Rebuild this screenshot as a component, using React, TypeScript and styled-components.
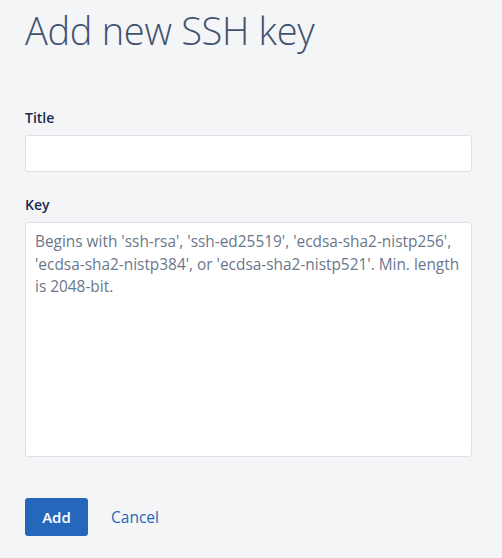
import React from "react";
import styled, { createGlobalStyle } from "styled-components";

const GlobalStyle = createGlobalStyle`
  body {
    margin: 0;
    background: #f4f5f7;
    font-family: "Open Sans", "Liberation Sans", sans-serif;
  }
`;

const AddSshKeyPage: React.FC = () => {
  return (
    <Page>
      <GlobalStyle />
      <Heading>Add new SSH key</Heading>
      <Form onSubmit={(e) => e.preventDefault()}>
        <Field>
          <Label htmlFor="ssh-title">Title</Label>
          <TextInput id="ssh-title" type="text" />
        </Field>
        <Field>
          <Label htmlFor="ssh-key">Key</Label>
          <KeyArea
            id="ssh-key"
            placeholder="Begins with 'ssh-rsa', 'ssh-ed25519', 'ecdsa-sha2-nistp256', 'ecdsa-sha2-nistp384', or 'ecdsa-sha2-nistp521'. Min. length is 2048-bit."
          />
        </Field>
        <Actions>
          <PrimaryButton type="submit">Add</PrimaryButton>
          <LinkButton type="button">Cancel</LinkButton>
        </Actions>
      </Form>
    </Page>
  );
};

export default AddSshKeyPage;

const Page = styled.div`
  width: 502px;
  height: 558px;
  box-sizing: border-box;
  padding: 0 30px 0 25px;
  background: #f4f5f7;
`;

const Heading = styled.h1`
  margin: 0;
  padding-top: 5px;
  font-size: 38px;
  font-weight: 300;
  line-height: 50px;
  color: #42526e;
  letter-spacing: -0.3px;
`;

const Form = styled.form`
  display: flex;
  flex-direction: column;
  margin-top: 53px;
`;

const Field = styled.div`
  display: flex;
  flex-direction: column;
  gap: 7px;
  margin-bottom: 23px;
`;

const Label = styled.label`
  font-size: 14px;
  font-weight: 600;
  line-height: 20px;
  color: #172b4d;
`;

const fieldBox = `
  box-sizing: border-box;
  width: 100%;
  border: 1px solid #dfe1e6;
  border-radius: 3px;
  background: #ffffff;
  font-family: "Open Sans", "Liberation Sans", sans-serif;
  outline: none;
`;

const TextInput = styled.input`
  ${fieldBox}
  height: 37px;
  padding: 0 10px;
  font-size: 15px;
`;

const KeyArea = styled.textarea`
  ${fieldBox}
  height: 235px;
  padding: 8px 9px;
  font-size: 15.4px;
  line-height: 22.5px;
  resize: none;
  color: #172b4d;

  &::placeholder {
    color: #6b778c;
    opacity: 1;
  }
`;

const Actions = styled.div`
  display: flex;
  align-items: center;
  gap: 8px;
  margin-top: 18px;
`;

const PrimaryButton = styled.button`
  width: 63px;
  height: 38px;
  border: none;
  border-radius: 3px;
  background: #2567ba;
  color: #ffffff;
  font-family: "Open Sans", "Liberation Sans", sans-serif;
  font-size: 15px;
  font-weight: 600;
  cursor: pointer;
`;

const LinkButton = styled.button`
  height: 38px;
  padding: 0 15px;
  border: none;
  background: transparent;
  color: #2567ba;
  font-family: "Open Sans", "Liberation Sans", sans-serif;
  font-size: 15.5px;
  font-weight: 500;
  cursor: pointer;
`;
